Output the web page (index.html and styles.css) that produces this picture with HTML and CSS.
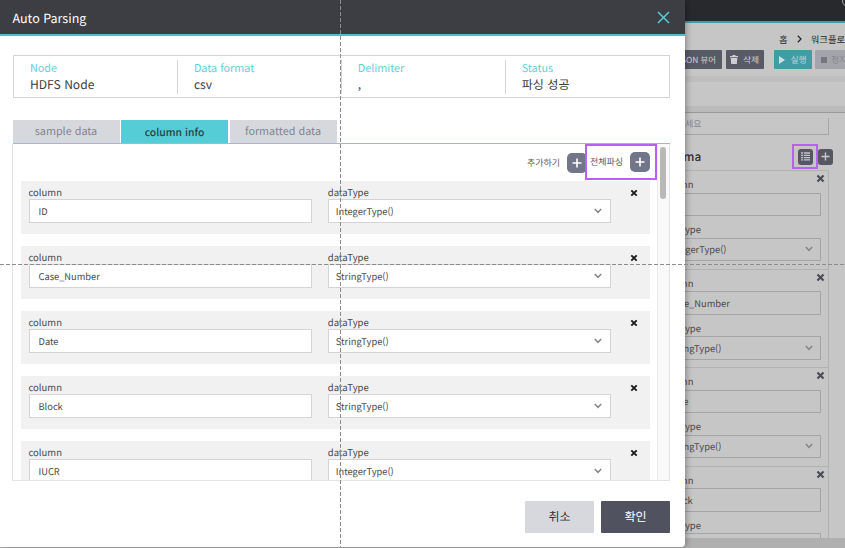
FILE: index.html
```html
<!DOCTYPE html>
<html lang="ko">
<head>
<meta charset="utf-8">
<title>Auto Parsing</title>
<link rel="stylesheet" href="styles.css">
</head>
<body>
<svg class="defs" width="0" height="0">
  <symbol id="times" viewBox="0 0 8 8"><path d="M1.3 1.3 6.7 6.7M6.7 1.3 1.3 6.7" fill="none" stroke="currentColor" stroke-width="1.9"/></symbol>
  <symbol id="chevron" viewBox="0 0 8 6"><path d="M.8 1 4 4.3 7.2 1" fill="none" stroke="currentColor" stroke-width="1.5"/></symbol>
  <symbol id="plus" viewBox="0 0 10 10"><path d="M5 .5V9.5M.5 5H9.5" fill="none" stroke="currentColor" stroke-width="1.6"/></symbol>
</svg>
<div class="page">
  <header class="topbar"><svg class="avatar" width="12" height="12" viewBox="0 0 12 12"><circle cx="6" cy="6" r="5.5" fill="none" stroke="#a5a6a8"/></svg></header>
  <nav class="crumbs"><span>홈</span><svg width="5" height="8" viewBox="0 0 5 8"><path d="M.8.8 4 4 .8 7.2" fill="none" stroke="#28292c" stroke-width="1.3"/></svg><span>워크플로</span></nav>
  <div class="toolbar">
    <span class="tool viewer">JSON 뷰어</span>
    <span class="tool del"><svg width="8" height="9" viewBox="0 0 8 9"><path d="M0 1H2.5V0H5.5V1H8V2.3H0ZM.7 3H7.3L6.8 9H1.2Z" fill="#cfcfd2"/></svg>삭제</span>
    <span class="tool run"><svg width="6" height="8" viewBox="0 0 6 8"><path d="M0 0 6 4 0 8Z" fill="#d0dfe0"/></svg>실행</span>
    <span class="tool stop"><svg width="6" height="6"><rect width="6" height="6" fill="#75767f"/></svg>정지</span>
  </div>
  <div class="band"></div>
  <div class="panel">
    <div class="hint">세요</div>
    <div class="schema"><h2>Schema</h2>
      <div class="mark mark-list"><span class="btn"><svg width="9" height="9" viewBox="0 0 9 9"><path d="M0 1H2M0 3.3H2M0 5.6H2M0 7.9H2M2.8 1H9M2.8 3.3H9M2.8 5.6H9M2.8 7.9H9" fill="none" stroke="#c4c4c8" stroke-width="1.3"/></svg></span></div>
      <span class="btn"><svg width="9" height="9"><use href="#plus"/></svg></span>
    </div>
    <div class="cards">
      <div class="card"><svg class="times" width="9" height="9"><use href="#times"/></svg><label>column</label><div class="field"></div><label>dataType</label><div class="field">IntegerType()<svg width="8" height="6"><use href="#chevron"/></svg></div></div>
      <div class="card"><svg class="times" width="9" height="9"><use href="#times"/></svg><label>column</label><div class="field">Case_Number</div><label>dataType</label><div class="field">StringType()<svg width="8" height="6"><use href="#chevron"/></svg></div></div>
      <div class="card"><svg class="times" width="9" height="9"><use href="#times"/></svg><label>column</label><div class="field">Date</div><label>dataType</label><div class="field">StringType()<svg width="8" height="6"><use href="#chevron"/></svg></div></div>
      <div class="card"><svg class="times" width="9" height="9"><use href="#times"/></svg><label>column</label><div class="field">Block</div><label>dataType</label><div class="field"></div></div>
    </div>
  </div>
  <div class="bottom"></div>
</div>

<div class="modal">
  <header class="head"><h1>Auto Parsing</h1><svg width="13" height="13" viewBox="0 0 13 13"><path d="M1 1 12 12M12 1 1 12" fill="none" stroke="#56ced8" stroke-width="1.5"/></svg></header>
  <div class="summary">
    <div><b>Node</b><span>HDFS Node</span></div>
    <div><b>Data format</b><span>csv</span></div>
    <div><b>Delimiter</b><span>,</span></div>
    <div><b>Status</b><span>파싱 성공</span></div>
  </div>
  <div class="tabs"><span>sample data</span><span class="on">column info</span><span>formatted data</span></div>
  <div class="body">
    <div class="content">
      <div class="actions"><span>추가하기</span><i class="add"><svg width="10" height="10"><use href="#plus"/></svg></i>
        <div class="mark mark-all"><span>전체파싱</span><i class="add"><svg width="10" height="10"><use href="#plus"/></svg></i></div></div>
      <div class="rows">
        <div class="row"><div><label>column</label><div class="field">ID</div></div><div><label>dataType</label><div class="field sel">IntegerType()<svg width="8" height="6"><use href="#chevron"/></svg></div></div><svg class="times" width="8" height="8"><use href="#times"/></svg></div>
        <div class="row"><div><label>column</label><div class="field">Case_Number</div></div><div><label>dataType</label><div class="field sel">StringType()<svg width="8" height="6"><use href="#chevron"/></svg></div></div><svg class="times" width="8" height="8"><use href="#times"/></svg></div>
        <div class="row"><div><label>column</label><div class="field">Date</div></div><div><label>dataType</label><div class="field sel">StringType()<svg width="8" height="6"><use href="#chevron"/></svg></div></div><svg class="times" width="8" height="8"><use href="#times"/></svg></div>
        <div class="row"><div><label>column</label><div class="field">Block</div></div><div><label>dataType</label><div class="field sel">StringType()<svg width="8" height="6"><use href="#chevron"/></svg></div></div><svg class="times" width="8" height="8"><use href="#times"/></svg></div>
        <div class="row"><div><label>column</label><div class="field">IUCR</div></div><div><label>dataType</label><div class="field sel">IntegerType()<svg width="8" height="6"><use href="#chevron"/></svg></div></div><svg class="times" width="8" height="8"><use href="#times"/></svg></div>
      </div>
    </div>
    <div class="scroll"><div class="thumb"></div></div>
  </div>
  <div class="foot"><span>취소</span><span class="ok">확인</span></div>
</div>
<div class="guide guide-v"></div>
<div class="guide guide-h"></div>
</body>
</html>
```

FILE: styles.css
```css
* { box-sizing: border-box; }
body { margin: 0; width: 845px; height: 548px; overflow: hidden; position: relative; font: 9.5px/14px "Noto Sans CJK KR", sans-serif; color: #48494c; text-rendering: geometricPrecision; }
svg { display: block; flex: none; }
.defs { position: absolute; }
h1, h2 { margin: 0; font-weight: 500; }
label { display: block; }
i { font-style: normal; }

/* page under the dialog */
.page { width: 845px; height: 548px; overflow: hidden; background: #c6c6c6; display: flex; flex-direction: column; }
.topbar { flex: none; height: 23px; background: #28292d; border-bottom: 2px solid #409da4; display: flex; justify-content: flex-end; }
.avatar { margin: -5px -9px 0 0; }
.crumbs { flex: none; height: 27px; padding: 5px 0 0 779px; display: flex; align-items: center; white-space: nowrap; font-size: 9.4px; color: #28292c; }
.crumbs svg { margin: 0 9px 0 9px; }
.toolbar { flex: none; height: 19px; padding-left: 665px; display: flex; font-size: 8.8px; color: #cfcfd2; white-space: nowrap; }
.tool { flex: none; height: 19px; background: #585a66; display: flex; align-items: center; justify-content: center; gap: 5px; border-radius: 1px; }
.viewer { width: 57px; justify-content: flex-end; padding-right: 6px; font-size: 8.4px; }
.del { width: 38px; margin-left: 3.5px; }
.run { width: 38px; margin: 0 3px 0 10.5px; background: #409da4; }
.stop { width: 42px; background: #a4a5ac; color: #85868f; justify-content: flex-start; padding-left: 6px; gap: 4px; }
.band { flex: none; margin-top: 7px; height: 37px; border-top: 6px solid #bebebe; border-bottom: 1px solid #999; box-shadow: inset 0 -6px #bbb; }
.panel { flex: none; height: 425px; padding: 5px 16px 0 656px; overflow: hidden; }
.hint { height: 17px; border: solid #a7a7a7; border-width: 0 1px 1px 0; padding-left: 29px; line-height: 11px; font-size: 9px; color: #88898c; }
.schema { height: 35px; margin-right: -4px; display: flex; align-items: center; padding-top: 8px; }
.schema h2 { flex: 1; font-size: 11.8px; color: #303135; }
.mark { border: 2px solid #b960f4; display: flex; align-items: center; }
.mark-list { width: 26px; height: 25px; justify-content: center; padding-left: 1px; }
.btn { width: 15px; height: 16px; background: #555764; border-radius: 3px; display: flex; align-items: center; justify-content: center; color: #c9c9cc; }
.card { height: 98.5px; border: solid #b2b2b2; border-width: 1px 1px 0 0; padding: 6px 8px 0 4px; position: relative; }
.card .times { position: absolute; right: 3px; top: 3px; color: #4a4c59; }
.card label { height: 15.5px; line-height: 14px; }
.card .field { width: 160.5px; height: 23.5px; background: transparent; border-color: #a5a5a5; margin-bottom: 6px; padding: 0 7px 0 7.5px; }
.bottom { flex: none; height: 10px; background: #b0b0b0; }

/* dialog */
.modal { position: absolute; left: 0; top: 0; width: 685px; height: 547px; background: #fff; border-radius: 0 0 4px 0; box-shadow: 1px 0 6px rgba(0,0,0,.35); display: flex; flex-direction: column; }
.head { height: 36px; background: #3d3e44; border-bottom: 2px solid #51bec8; display: flex; align-items: center; justify-content: space-between; padding: 1px 15px 0 12.5px; color: #fff; }
.head h1 { font-size: 12.5px; font-weight: 400; }
.summary { height: 43px; margin: 19px 15px 0 12.5px; border: 1px solid #d3d4d6; display: flex; }
.summary div { width: 164.2px; padding: 4px 0 0 16.5px; display: flex; flex-direction: column; position: relative; }
.summary div + div::before { content: ""; position: absolute; left: 0; top: 4px; width: 1px; height: 34px; background: #d3d4d6; }
.summary b { font-weight: 400; font-size: 10.8px; line-height: 16px; color: #62d0da; }
.summary span { font-size: 12.1px; line-height: 18px; color: #3f4043; }
.tabs { margin: 22px 15px 0 12.5px; height: 24px; border-bottom: 1px solid #6fd0d7; display: flex; gap: 1.5px; }
.tabs span { width: 107px; height: 23px; line-height: 23px; text-align: center; font-size: 10.8px; background: #d7d8de; color: #828490; }
.tabs .on { background: #56ccd6; color: #2d3e43; font-weight: 500; font-size: 10.4px; }
.body { height: 337px; margin: 0 15px 0 12px; border: 1px solid #e4e4e4; border-top: 0; display: flex; overflow: hidden; }
.content { width: 644px; }
.actions { height: 37px; display: flex; justify-content: flex-end; align-items: center; font-size: 9px; color: #5b5c60; white-space: nowrap; }
.add { width: 20px; height: 20px; border-radius: 5px; background: #72768a; color: #fff; display: flex; align-items: center; justify-content: center; margin-left: 7px; }
.mark-all { width: 72px; height: 36px; padding-left: 3px; margin: -1px 0 0 -2px; background: #fff; }
.rows { display: flex; flex-direction: column; gap: 11.5px; padding-left: 8px; }
.row { flex: none; width: 629px; height: 53.4px; background: #f1f1f1; display: flex; padding: 4.2px 12px 0 7.5px; gap: 15px; }
.row > div { width: 284.5px; }
.row > div + div { width: 284px; margin-left: .5px; }
.row label { height: 14.3px; }
.field { height: 23.5px; background: #fff; border: 1px solid #d3d4d6; padding: 0 8px 0 9px; font-size: 9.3px; display: flex; align-items: center; justify-content: space-between; }
.sel { padding-left: 7px; }
.field svg { color: #85868a; }
.row .times { margin: 4px 0 0 4px; color: #1c1c1e; }
.scroll { width: 12px; background: #f9f9f9; border-left: 1px solid #ebebeb; padding: 3px 0 0 2px; }
.thumb { width: 6px; height: 52px; border-radius: 3px; background: #b8b8b8; }
.foot { display: flex; gap: 7px; margin: 20px 15px 0 0; justify-content: flex-end; }
.foot span { width: 69px; height: 32px; line-height: 32px; text-align: center; font-size: 12px; background: #d7d8de; color: #333438; border-radius: 1px; }
.foot .ok { background: #50535f; color: #fff; }

/* centre guides */
.guide { position: absolute; }
.guide-v { left: 340px; top: 0; width: 1px; height: 548px; background: repeating-linear-gradient(180deg, #8c8c8c 0 4px, transparent 4px 6px); }
.guide-h { left: 0; top: 264px; width: 845px; height: 1px; background: repeating-linear-gradient(90deg, #8c8c8c 0 4px, transparent 4px 6px); }
```
